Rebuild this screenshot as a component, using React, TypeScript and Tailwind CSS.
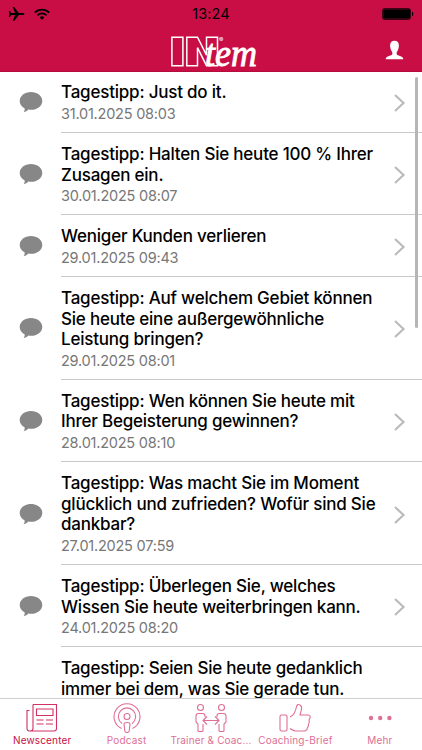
import type { ReactNode } from "react";

type NewsItem = {
  lines: string[];
  date?: string;
};

const news: NewsItem[] = [
  { lines: ["Tagestipp: Just do it."], date: "31.01.2025 08:03" },
  { lines: ["Tagestipp: Halten Sie heute 100 % Ihrer", "Zusagen ein."], date: "30.01.2025 08:07" },
  { lines: ["Weniger Kunden verlieren"], date: "29.01.2025 09:43" },
  {
    lines: ["Tagestipp: Auf welchem Gebiet können", "Sie heute eine außergewöhnliche", "Leistung bringen?"],
    date: "29.01.2025 08:01",
  },
  { lines: ["Tagestipp: Wen können Sie heute mit", "Ihrer Begeisterung gewinnen?"], date: "28.01.2025 08:10" },
  {
    lines: ["Tagestipp: Was macht Sie im Moment", "glücklich und zufrieden? Wofür sind Sie", "dankbar?"],
    date: "27.01.2025 07:59",
  },
  { lines: ["Tagestipp: Überlegen Sie, welches", "Wissen Sie heute weiterbringen kann."], date: "24.01.2025 08:20" },
  { lines: ["Tagestipp: Seien Sie heute gedanklich", "immer bei dem, was Sie gerade tun."] },
];

function StatusBar() {
  return (
    <div className="grid h-7 grid-cols-3 items-center pl-[8px] pr-[8px] text-black">
      <div className="flex items-center gap-[9px]">
        <svg width="17" height="16" viewBox="0 0 17 16" fill="currentColor">
          <path d="M16.5 8c0-.7-.8-1.100-1.900-1.100h-3.800L6.200 1H4.700l2.400 5.900H3.300L1.900 5H.8l.7 3-.7 3h1.100l1.400-1.900h3.800L4.700 15h1.500l4.600-5.900h3.800c1.100 0 1.900-.4 1.900-1.100z" />
        </svg>
        <svg width="16" height="13" viewBox="0 0 16 13" fill="none" stroke="currentColor" strokeWidth="1.7">
          <path d="M.8 4.600a10.200 10.200 0 0 1 14.400 0" />
          <path d="M3.400 7.300a6.500 6.500 0 0 1 9.200 0" />
          <path d="M8 11.800 5.600 9.500a3.400 3.400 0 0 1 4.800 0z" fill="currentColor" stroke="none" />
        </svg>
      </div>
      <span className="text-center text-[14.5px] tracking-[0.1px]">13:24</span>
      <svg className="justify-self-end" width="32" height="12" viewBox="0 0 32 12">
        <rect x=".5" y=".5" width="28" height="11" rx="2" fill="#000" fillOpacity=".5" stroke="#000" strokeOpacity=".6" />
        <rect x="1.5" y="1.5" width="26.5" height="9" rx="1" fill="#000" />
        <path d="M30 3.800c1.700.5 1.700 3.900 0 4.400z" fill="#000" />
      </svg>
    </div>
  );
}

function Logo() {
  return (
    <svg className="mt-[6px] overflow-visible" width="92" height="37" viewBox="0 0 92 37" fill="none">
      <g stroke="#fff" strokeWidth="1.5">
        <path d="M2.900 3.200h11v28.500h-11z" />
        <path d="M17.800 3.200h10.700l9 18v-18h11v28.500H37.500l-9-18v18H17.800z" />
      </g>
      <text
        x="36"
        y="31.500"
        fill="#fff"
        stroke="#fff"
        strokeWidth="0.9"
        textLength="52"
        lengthAdjust="spacingAndGlyphs"
        className="font-['Liberation_Serif',serif] text-[38px] italic"
      >
        tem
      </text>
      <text x="50" y="7.500" fill="#fff" className="text-[6.5px]">
        ®
      </text>
    </svg>
  );
}

function Header() {
  return (
    <header className="h-[72px] shrink-0 border-b border-[#b50c3e] bg-[#c90e46]">
      <StatusBar />
      <div className="grid h-[43px] grid-cols-[169px_92px_1fr] items-start">
        <span />
        <Logo />
        <svg className="mt-[12px] mr-[18px] justify-self-end" width="19" height="20" viewBox="0 0 19 20" fill="#fff">
          <path d="M9.500.7c2.900 0 4.400 1.800 4.400 4.800 0 2.800-1 5.300-2.200 6.600v2.200c.3 1.700 6.200 1.200 6.700 5H.6c.5-3.800 6.400-3.300 6.700-5v-2.200C6.100 10.800 5.100 8.300 5.100 5.500 5.100 2.500 6.600.7 9.500.7z" />
        </svg>
      </div>
    </header>
  );
}

function NewsRow({ item }: { item: NewsItem }) {
  return (
    <li className="flex">
      <div className="flex w-[61px] shrink-0 items-center justify-center">
        <svg width="24" height="22" viewBox="0 0 24 22" fill="#878787">
          <path d="M12 1c6.300 0 11.300 4 11.300 8.900s-5 8.900-11.300 8.900c-.9 0-1.800-.1-2.600-.2-1.300 1.400-2.900 2.200-4.800 2.600.8-1.100 1.200-2.300 1.100-3.800C2.600 15.800.7 13 .7 9.900.7 5 5.700 1 12 1z" />
        </svg>
      </div>
      <div className="flex flex-1 items-center border-b border-[#c8c8c8] pt-[11px] pb-[8.1px]">
        <div className={item.date ? "flex-1" : "min-h-[106px] flex-1"}>
          <h2 className="text-[17px] leading-[20.6px] font-medium tracking-[-0.21px] whitespace-nowrap text-black">
            {item.lines.map((line) => (
              <span key={line} className="block">
                {line}
              </span>
            ))}
          </h2>
          {item.date && (
            <p className="pt-[1px] text-[14.5px] leading-[20px] tracking-[-0.22px] text-[#777]">{item.date}</p>
          )}
        </div>
        <svg className="mr-[16px] shrink-0" width="13" height="20" viewBox="0 0 13 20" fill="none" stroke="#bbb" strokeWidth="2.2">
          <path d="M2 2l8.500 8L2 18" />
        </svg>
      </div>
    </li>
  );
}

function Tab({ label, active, children }: { label: string; active?: boolean; children: ReactNode }) {
  return (
    <button
      className={
        active
          ? "flex flex-col items-center pt-[4px] text-[#c90e46]"
          : "flex flex-col items-center pt-[4px] text-[#de6f96]"
      }
    >
      <svg width="34" height="30" viewBox="0 0 34 30" fill="none" stroke="currentColor" strokeWidth="1.1">
        {children}
      </svg>
      <span className="text-[10px] leading-[14px] tracking-[0.15px] whitespace-nowrap">{label}</span>
    </button>
  );
}

function TabBar() {
  return (
    <nav className="grid h-[52px] shrink-0 grid-cols-5 border-t border-[#cfcfcf] bg-white">
      <Tab label="Newscenter" active>
        <path
          strokeOpacity=".85"
          d="M8 1.500h23.500v24q0 2.500-2.500 2.500H4.500Q2 28 2 25.500V7.500h2.500M8 1.500v24Q8 28 5 28M11.500 6h16.500v6.500H11.500zM11.500 17h7M21 17h7M11.500 21h7M21 21h7"
        />
      </Tab>
      <Tab label="Podcast">
        <circle cx="17" cy="13.500" r="3" />
        <path d="M12 20.500a8.600 8.600 0 1 1 10 0M11.500 25.500a13 13 0 1 1 11 0M14 21q0-1.500 3-1.500t3 1.500l-.8 7q-.2 1.500-2.200 1.500t-2.200-1.500z" />
      </Tab>
      <Tab label="Trainer & Coac...">
        <circle cx="6.500" cy="4.500" r="3" />
        <circle cx="27.500" cy="4.500" r="3" />
        <path d="M11 14v-1q0-2.500-2.500-2.500h-4Q2 10.500 2 13v6l2 2v6.500q0 1 1 1h3q1 0 1-1V21M23 14v-1q0-2.500 2.500-2.500h4q2.500 0 2.500 2.500v6l-2 2v6.500q0 1-1 1h-3q-1 0-1-1V21M9 17.500h16M13 13.500l-4 4 4 4M21 13.500l4 4-4 4" />
      </Tab>
      <Tab label="Coaching-Brief">
        <rect x="2" y="12" width="7" height="16" rx="1.500" />
        <path d="M12 14q5-2 6.500-10.500 1-3 3.500-1.500 2 1 1.500 4.500L22 12h8q3 .5 2 3l-1 2q1 2-.5 4 .5 2-1 3.500 0 2.500-2.500 3.500H17q-2-.5-5-2.500" />
      </Tab>
      <Tab label="Mehr">
        <g fill="currentColor" stroke="none">
          <circle cx="8" cy="15" r="2.200" />
          <circle cx="17.200" cy="15" r="2.200" />
          <circle cx="26.400" cy="15" r="2.200" />
        </g>
      </Tab>
    </nav>
  );
}

export default function App() {
  return (
    <div className="flex h-[750px] w-[422px] flex-col overflow-hidden bg-white font-[Inter,'Liberation_Sans',sans-serif]">
      <Header />
      <main className="relative min-h-0 flex-1 overflow-hidden">
        <ul className="-mt-[0.7px]">
          {news.map((item) => (
            <NewsRow key={item.lines[0]} item={item} />
          ))}
        </ul>
        {/* scroll indicator */}
        <div className="absolute top-[5px] right-[4px] h-[251px] w-[3px] rounded-full bg-[#b6b6b6]" />
      </main>
      <TabBar />
    </div>
  );
}
